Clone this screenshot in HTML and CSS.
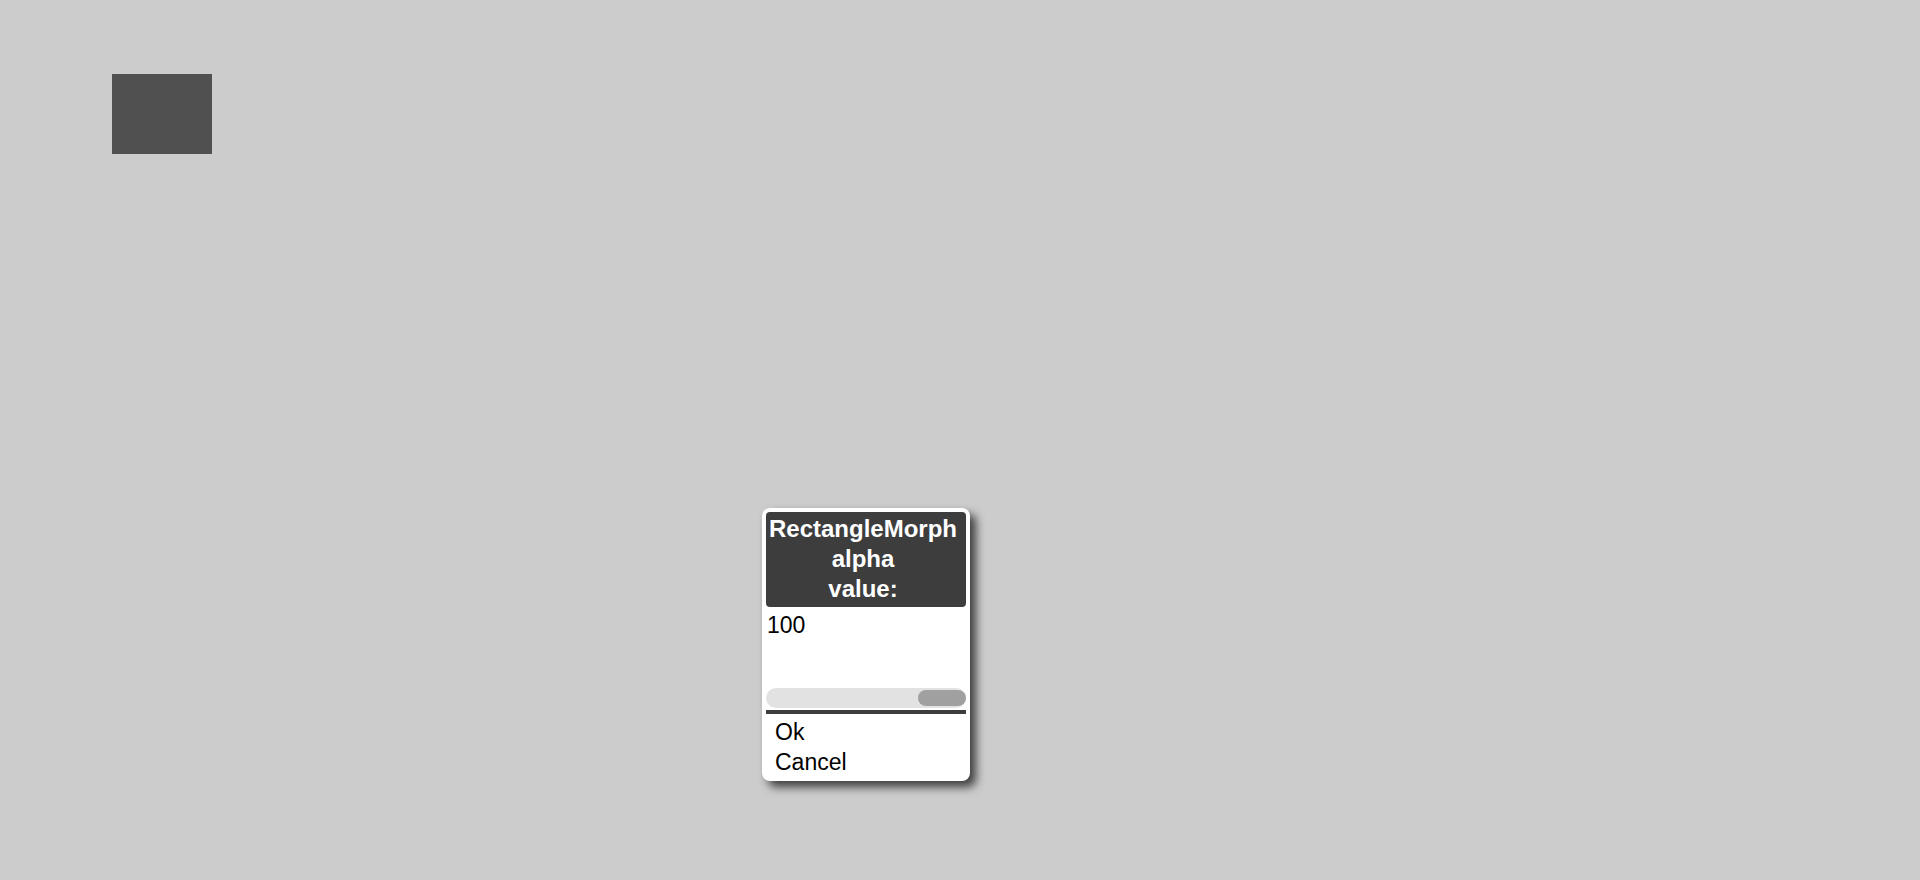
FILE: index.html
```html
<!DOCTYPE html>
<html>
<head>
<meta charset="utf-8">
<link rel="stylesheet" href="styles.css">
</head>
<body>
<div class="world">
  <div class="morph"></div>
  <div class="dialog">
    <div class="title">RectangleMorph<br>alpha<br>value:</div>
    <div class="field">100</div>
    <div class="slider"><div class="knob"></div></div>
    <div class="sep"></div>
    <div class="buttons">
      <div class="btn">Ok</div>
      <div class="btn">Cancel</div>
    </div>
  </div>
</div>
</body>
</html>
```
FILE: styles.css
```css
html, body {
  margin: 0;
  padding: 0;
  background: #cccccc;
  width: 1920px;
  height: 880px;
  overflow: hidden;
  font-family: "Liberation Sans", Arial, sans-serif;
}
.world {
  position: relative;
  width: 1920px;
  height: 880px;
}
.morph {
  position: absolute;
  left: 112px;
  top: 74px;
  width: 100px;
  height: 80px;
  background: #505050;
}
.dialog {
  position: absolute;
  left: 762px;
  top: 508px;
  width: 200px;
  padding: 4px;
  background: #ffffff;
  border-radius: 8px;
  box-shadow: 6px 6px 10px rgba(0, 0, 0, 0.7);
  display: flex;
  flex-direction: column;
}
.title {
  background: #3d3d3d;
  color: #ffffff;
  border-radius: 4px;
  font-weight: bold;
  font-size: 24px;
  line-height: 30px;
  text-align: center;
  padding: 2px 6px 0 0;
  box-sizing: border-box;
  height: 95px;
  white-space: nowrap;
}
.field {
  height: 81px;
  padding-top: 5px;
  padding-left: 1px;
  box-sizing: border-box;
  font-size: 23px;
  line-height: normal;
  color: #000;
}
.slider {
  height: 20px;
  border-radius: 10px;
  background: #e2e2e2;
  display: flex;
  justify-content: flex-end;
  align-items: center;
}
.knob {
  width: 48px;
  height: 16px;
  border-radius: 8px;
  background: #a0a0a0;
}
.sep {
  margin-top: 2px;
  height: 4px;
  background: #3d3d3d;
}
.buttons {
  padding-top: 3px;
  display: flex;
  flex-direction: column;
}
.btn {
  font-size: 23px;
  line-height: 30px;
  padding-left: 9px;
  color: #000;
}
```
